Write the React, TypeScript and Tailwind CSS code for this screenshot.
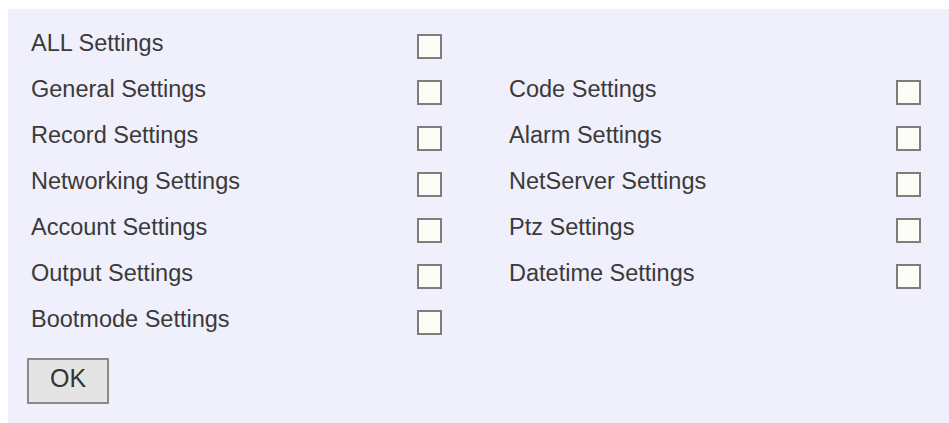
import React from "react";

type Item = { label: string };

const left: Item[] = [
  { label: "ALL Settings" },
  { label: "General Settings" },
  { label: "Record Settings" },
  { label: "Networking Settings" },
  { label: "Account Settings" },
  { label: "Output Settings" },
  { label: "Bootmode Settings" },
];

const right: (Item | null)[] = [
  null,
  { label: "Code Settings" },
  { label: "Alarm Settings" },
  { label: "NetServer Settings" },
  { label: "Ptz Settings" },
  { label: "Datetime Settings" },
  null,
];

function Box() {
  return (
    <span className="block h-[25px] w-[25px] border-2 border-[#7d7d7d] bg-[#fdfdf7]" />
  );
}

export default function App() {
  return (
    <div className="min-h-[423px] bg-white pl-[8px] pt-[9px]">
      <div
        className="min-h-[414px] bg-[#f0effc] pl-[23px] pt-[14px] text-[#3a3a3a]"
        style={{ fontFamily: '"Liberation Sans", Arial, sans-serif' }}
      >
        <div className="grid grid-cols-[386px_25px_67px_387px_25px]">
          {left.map((l, i) => {
            const r = right[i];
            return (
              <React.Fragment key={l.label}>
                <div className="flex h-[46.1px] items-center pb-[5px] text-[23.5px]">{l.label}</div>
                <div className="flex h-[46.1px] items-center">
                  <Box />
                </div>
                <div />
                <div className="flex h-[46.1px] items-center pb-[5px] text-[23.5px]">{r ? r.label : ""}</div>
                <div className="flex h-[46.1px] items-center">{r ? <Box /> : null}</div>
              </React.Fragment>
            );
          })}
        </div>
        <button className="-ml-[4px] mt-[12px] flex h-[46px] w-[82px] items-center justify-center border-2 border-[#8a8a8a] bg-[#e4e4e4] pb-[3px] text-[25px] text-[#333]">
          OK
        </button>
      </div>
    </div>
  );
}
